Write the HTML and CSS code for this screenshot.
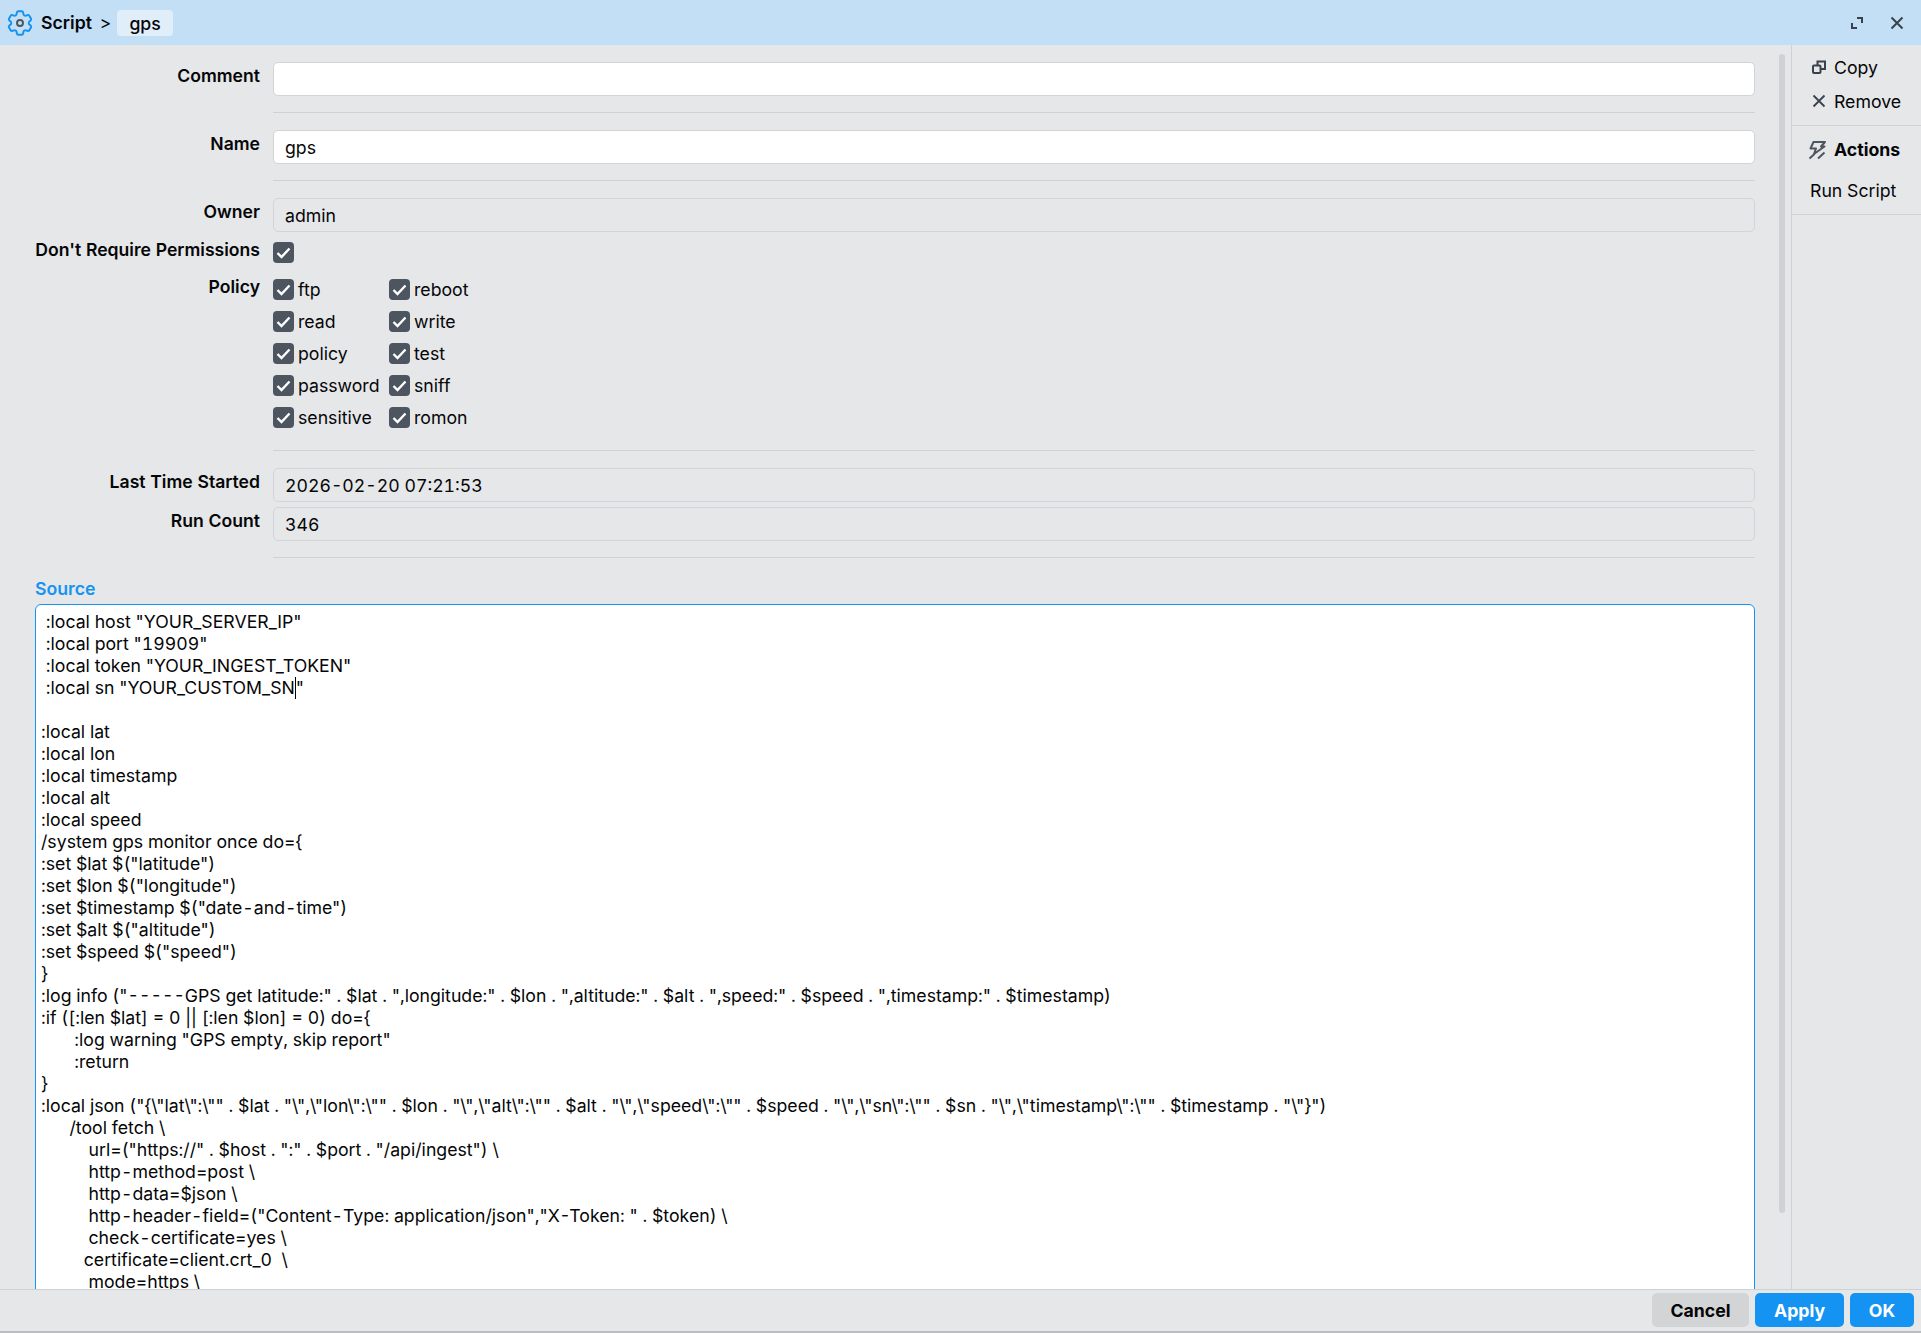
FILE: index.html
```html
<!DOCTYPE html>
<html lang="en">
<head>
<meta charset="utf-8">
<title>Script gps</title>
<link rel="stylesheet" href="styles.css">
</head>
<body>
<div class="window">
  <header class="titlebar">
    <svg class="gear" viewBox="2 2 20 20" width="26" height="26" fill="none" stroke="#1593f2" stroke-width="1.500" stroke-linejoin="round"><path d="M9.594 3.940c.09-.542.56-.94 1.110-.94h2.593c.55 0 1.020.398 1.110.94l.213 1.281c.063.374.313.686.645.87.074.04.147.083.22.127.325.196.72.257 1.075.124l1.217-.456a1.125 1.125 0 0 1 1.370.49l1.296 2.247a1.125 1.125 0 0 1-.26 1.431l-1.003.827c-.293.241-.438.613-.43.992a7.723 7.723 0 0 1 0 .255c-.008.378.137.75.43.991l1.004.827c.424.35.534.955.26 1.430l-1.298 2.247a1.125 1.125 0 0 1-1.369.491l-1.217-.456c-.355-.133-.75-.072-1.076.124a6.470 6.470 0 0 1-.22.128c-.331.183-.581.495-.644.869l-.213 1.281c-.09.543-.56.94-1.110.94h-2.594c-.55 0-1.019-.398-1.110-.94l-.213-1.281c-.062-.374-.312-.686-.644-.87a6.520 6.520 0 0 1-.22-.127c-.325-.196-.72-.257-1.076-.124l-1.217.456a1.125 1.125 0 0 1-1.369-.49l-1.297-2.247a1.125 1.125 0 0 1 .26-1.431l1.004-.827c.292-.24.437-.613.43-.991a6.932 6.932 0 0 1 0-.255c.007-.38-.138-.751-.43-.992l-1.004-.827a1.125 1.125 0 0 1-.26-1.430l1.297-2.247a1.125 1.125 0 0 1 1.370-.491l1.216.456c.356.133.751.072 1.076-.124.072-.044.146-.086.22-.128.332-.183.582-.495.644-.869l.214-1.280Z"/><circle cx="12" cy="12" r="2.300" stroke="#4c5560"/></svg>
    <span class="crumb">Script</span>
    <span class="sep">&gt;</span>
    <span class="tab">gps</span>
    <span class="grow"></span>
    <svg class="ticon" viewBox="0 0 14 14" width="14" height="14" fill="none" stroke="#39424c" stroke-width="2"><path d="M7 2h5v5M7 12H2V7"/></svg>
    <svg class="ticon close" viewBox="0 0 14 14" width="14" height="14" fill="none" stroke="#39424c" stroke-width="2"><path d="M1.500 1.500l11 11M12.500 1.500l-11 11"/></svg>
  </header>
  <div class="middle">
    <main class="form">
      <div class="scrollbar"></div>
      <div class="row"><label class="label">Comment</label><div class="input"></div></div>
      <div class="rule"></div>
      <div class="row"><label class="label">Name</label><div class="input">gps</div></div>
      <div class="rule"></div>
      <div class="row"><label class="label">Owner</label><div class="input ro">admin</div></div>
      <div class="row check-row"><label class="label up">Don't Require Permissions</label><div class="checks"><span class="cb"><svg viewBox="0 0 21 21"><path d="M4.500 11l4 4 8-8.500"/></svg></span></div></div>
      <div class="row policy-row"><label class="label up">Policy</label>
        <div class="policy">
          <span class="opt"><span class="cb"><svg viewBox="0 0 21 21"><path d="M4.500 11l4 4 8-8.500"/></svg></span>ftp</span>
          <span class="opt"><span class="cb"><svg viewBox="0 0 21 21"><path d="M4.500 11l4 4 8-8.500"/></svg></span>reboot</span>
          <span class="opt"><span class="cb"><svg viewBox="0 0 21 21"><path d="M4.500 11l4 4 8-8.500"/></svg></span>read</span>
          <span class="opt"><span class="cb"><svg viewBox="0 0 21 21"><path d="M4.500 11l4 4 8-8.500"/></svg></span>write</span>
          <span class="opt"><span class="cb"><svg viewBox="0 0 21 21"><path d="M4.500 11l4 4 8-8.500"/></svg></span>policy</span>
          <span class="opt"><span class="cb"><svg viewBox="0 0 21 21"><path d="M4.500 11l4 4 8-8.500"/></svg></span>test</span>
          <span class="opt"><span class="cb"><svg viewBox="0 0 21 21"><path d="M4.500 11l4 4 8-8.500"/></svg></span>password</span>
          <span class="opt"><span class="cb"><svg viewBox="0 0 21 21"><path d="M4.500 11l4 4 8-8.500"/></svg></span>sniff</span>
          <span class="opt"><span class="cb"><svg viewBox="0 0 21 21"><path d="M4.500 11l4 4 8-8.500"/></svg></span>sensitive</span>
          <span class="opt"><span class="cb"><svg viewBox="0 0 21 21"><path d="M4.500 11l4 4 8-8.500"/></svg></span>romon</span>
        </div>
      </div>
      <div class="rule rule-policy"></div>
      <div class="row"><label class="label">Last Time Started</label><div class="input ro num">2026-02-20 07:21:53</div></div>
      <div class="row second"><label class="label">Run Count</label><div class="input ro num">346</div></div>
      <div class="rule"></div>
      <div class="source-label">Source</div>
      <div class="source"><pre class="code"> :local host "YOUR_SERVER_IP"
 :local port "19909"
 :local token "YOUR_INGEST_TOKEN"
 :local sn "YOUR_CUSTOM_SN<span class="caret"></span>"

:local lat
:local lon
:local timestamp
:local alt
:local speed
/system gps monitor once do={
:set $lat $("latitude")
:set $lon $("longitude")
:set $timestamp $("date-and-time")
:set $alt $("altitude")
:set $speed $("speed")
}
:log info ("-----GPS get latitude:" . $lat . ",longitude:" . $lon . ",altitude:" . $alt . ",speed:" . $speed . ",timestamp:" . $timestamp)
:if ([:len $lat] = 0 || [:len $lon] = 0) do={
       :log warning "GPS empty, skip report"
       :return
}
:local json ("{\"lat\":\"" . $lat . "\",\"lon\":\"" . $lon . "\",\"alt\":\"" . $alt . "\",\"speed\":\"" . $speed . "\",\"sn\":\"" . $sn . "\",\"timestamp\":\"" . $timestamp . "\"}")
      /tool fetch \
          url=("https://" . $host . ":" . $port . "/api/ingest") \
          http-method=post \
          http-data=$json \
          http-header-field=("Content-Type: application/json","X-Token: " . $token) \
          check-certificate=yes \
         certificate=client.crt_0  \
          mode=https \</pre></div>
    </main>
    <aside class="side">
      <div class="side-group top">
        <div class="side-item"><svg viewBox="0 0 14 14" width="14" height="14" fill="none" stroke="#39424c" stroke-width="2"><rect x="1" y="5.500" width="7.500" height="7.500" rx="1"/><path d="M5.500 5.500V1.500h7.500v7.500H8.500"/></svg>Copy</div>
        <div class="side-item"><svg viewBox="0 0 14 14" width="14" height="14" fill="none" stroke="#39424c" stroke-width="1.800"><path d="M1.500 1.500l11 11M12.500 1.500l-11 11"/></svg>Remove</div>
      </div>
      <div class="side-group">
        <div class="side-head"><svg viewBox="0 0 18 20" width="18" height="20" fill="none" stroke="#4c5560" stroke-width="2" stroke-linejoin="round"><path d="M5.500 2h11.500l-4 4.500h3.500L6 14l2-5.500H2.500zM1.500 18.500l5-4.500M10 18.500l6.500-6"/></svg>Actions</div>
        <div class="side-action">Run Script</div>
      </div>
    </aside>
  </div>
  <footer class="footer">
    <button class="btn cancel">Cancel</button>
    <button class="btn primary">Apply</button>
    <button class="btn primary">OK</button>
  </footer>
</div>
</body>
</html>
```

FILE: styles.css
```css
* { box-sizing: border-box; }
html, body { margin: 0; height: 100%; overflow: hidden; }
body { font-family: Inter, "Liberation Sans", sans-serif; font-size: 17.7px; color: #050607; background: #e6e7e9; font-variant-numeric: tabular-nums; }
.window { height: 1333px; display: flex; flex-direction: column; }
.titlebar { height: 45px; flex: none; background: #c3dff5; display: flex; align-items: center; padding-left: 7px; padding-right: 17px; }
.gear { flex: none; }
.crumb { font-weight: 600; margin-left: 8px; }
.sep { margin-left: 8px; }
.tab { margin-left: 6px; height: 26px; line-height: 28px; padding: 0 12px; background: #e0eefa; border-radius: 4px; font-weight: 500; }
.grow { flex: 1; }
.ticon { flex: none; }
.close { margin-left: 26px; }
.middle { flex: 1; min-height: 0; display: flex; }
.form { position: relative; flex: none; width: 1792px; height: 1244px; padding-top: 17px; overflow: hidden; border-right: 1px solid #cfd1d4; }
.scrollbar { position: absolute; left: 1779px; top: 9px; width: 6px; height: 1159px; background: #cfd2d5; border-radius: 3px; }
.row { display: grid; grid-template-columns: 260px 1482px; column-gap: 13px; }
.label { text-align: right; font-weight: 600; font-size: 17.6px; line-height: 20px; padding-top: 4px; }
.label.up { padding-top: 0; margin-top: -2px; }
.input { height: 34px; background: #fff; border: 1px solid #d2d4d7; border-radius: 5px; padding: 1px 11px 0; line-height: 32px; }
.input.ro { background: #e6e7e9; }
.rule { height: 1px; margin: 16px 0 17px 273px; width: 1482px; background: #cfd1d4; }
.check-row { margin-top: 10px; height: 21px; }
.cb { flex: none; width: 21px; height: 21px; background: #4c5560; border-radius: 4px; display: block; }
.cb svg { display: block; width: 21px; height: 21px; fill: none; stroke: #fff; stroke-width: 2.400; }
.policy-row { margin-top: 16px; }
.policy { display: grid; grid-template-columns: 116px 116px; grid-auto-rows: 32px; }
.opt { display: flex; align-items: flex-start; gap: 4px; line-height: 22px; }
.rule-policy { margin-top: 11px; margin-bottom: 17px; }
.second { margin-top: 5px; }
.source-label { margin: 21px 0 0 35px; color: #1593f2; font-weight: 600; line-height: 20px; height: 20px; }
.source { margin: 5px 0 0 35px; width: 1720px; height: 700px; background: #fff; border: 1px solid #1593f2; border-radius: 6px 6px 0 0; padding: 6px 0 0 5px; }
.code { margin: 0; font: inherit; line-height: 22px; white-space: pre; }
.caret { display: inline-block; width: 0; height: 22px; border-left: 1px solid #000; vertical-align: top; }
.side { flex: 1; min-width: 0; }
.side-group { border-bottom: 1px solid #cfd1d4; }
.side-group.top { height: 81px; padding-top: 5px; }
.side-item { display: flex; align-items: center; height: 34px; padding-left: 20px; gap: 8px; }
.side-head { display: flex; align-items: center; gap: 8px; height: 41px; padding-left: 16px; font-weight: 700; margin-top: 3px; }
.side-action { height: 34px; line-height: 34px; padding-left: 18px; margin-top: 4px; margin-bottom: 6px; }
.footer { height: 44px; flex: none; display: flex; justify-content: flex-end; align-items: flex-start; gap: 6px; padding: 3px 7px 0 0; border-top: 1px solid #cfd1d4; border-bottom: 2px solid #b9bcc0; }
.btn { height: 34px; border: 0; border-radius: 5px; font: 700 17.7px Inter, sans-serif; padding: 0; }
.cancel { width: 97px; background: #d3d4d6; color: #050607; }
.primary { background: #1593f2; color: #fff; width: 89px; }
.primary:last-child { width: 64px; }
```
